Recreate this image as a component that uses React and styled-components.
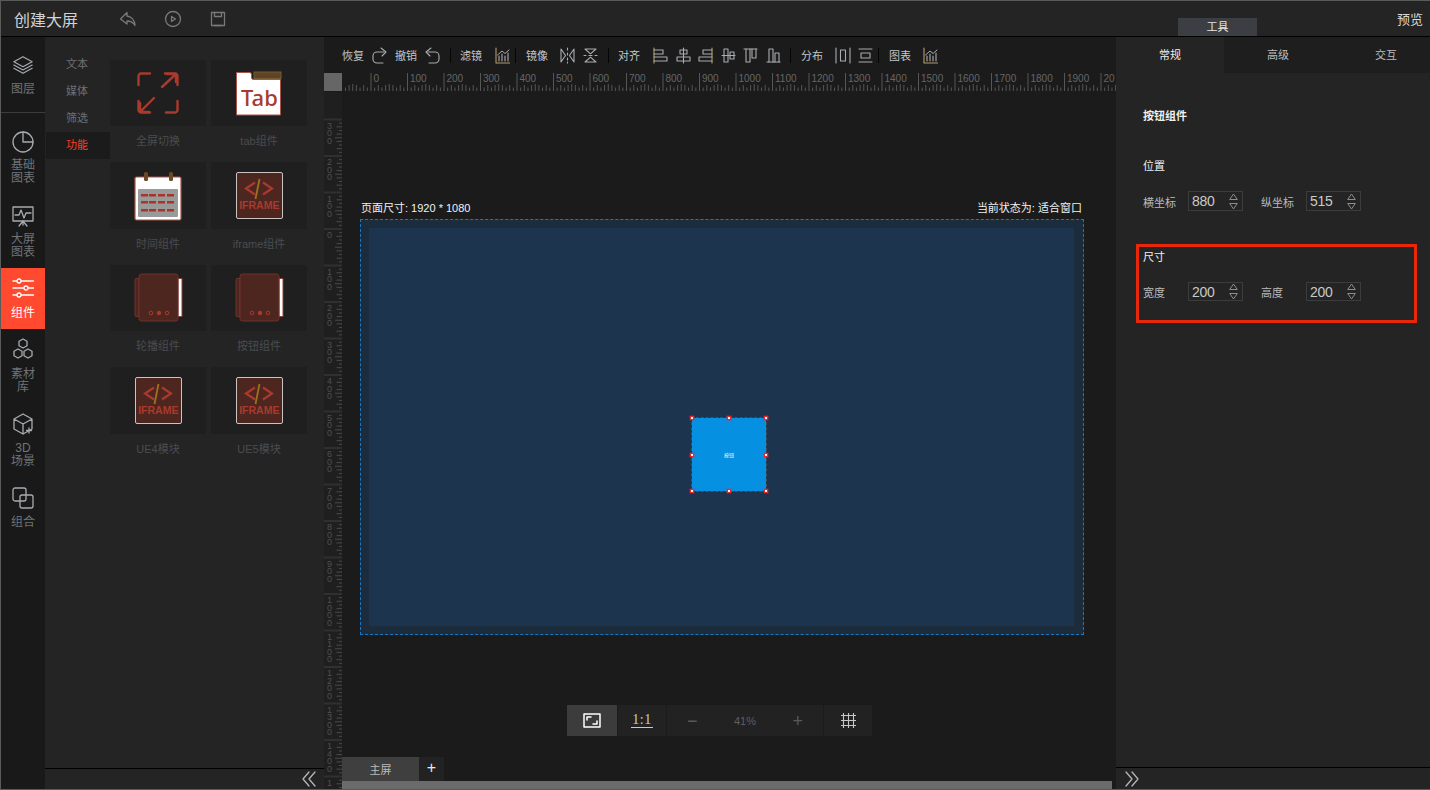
import React from 'react';
import styled, { createGlobalStyle } from 'styled-components';

const Global = createGlobalStyle`
  html, body { margin: 0; padding: 0; background: #242424; }
  body { font-family: "Liberation Sans", "Noto Sans CJK SC", sans-serif; overflow: hidden; }
  * { box-sizing: border-box; }
`;

const Page = styled.div`
  width: 1430px; height: 790px; display: flex; flex-direction: column; background: #242424;
  border-top: 1px solid #5a5a5a; border-left: 1px solid #5a5a5a; border-bottom: 1px solid #5a5a5a;
  overflow: hidden;
`;
const Header = styled.header`
  height: 36px; flex: none; display: flex; align-items: center; background: #242424;
  border-bottom: 1px solid #000; padding-left: 13px; position: relative;
`;
const Title = styled.div`font-size: 16px; color: #d2d2d2; width: 105px;`;
const HeaderIcons = styled.div`display: flex; gap: 27px; align-items: center; color: #77797c;`;
const ToolTab = styled.div`
  position: absolute; left: 1177px; bottom: 0; width: 79px; height: 18px; background: #3b3e43;
  color: #e6e6e6; font-size: 11px; text-align: center; line-height: 19px;
`;
const Preview = styled.div`margin-left: auto; margin-right: 7px; font-size: 13px; color: #d8d8d8; margin-top: -1px;`;

const Body = styled.div`flex: 1; display: flex; min-height: 0;`;

const Nav = styled.nav`width: 44px; flex: none; background: #191919; display: flex; flex-direction: column;`;
const NavItem = styled.div`
  height: ${p => p.$h}px; flex: none; display: flex; flex-direction: column; align-items: center;
  padding-top: ${p => p.$pt}px; font-size: 12px; line-height: 13px; text-align: center;
  color: ${p => p.$active ? '#fff' : '#707377'};
  background: ${p => p.$active ? '#ff4a2f' : 'transparent'};
  border-bottom: ${p => p.$divider ? '1px solid #3c3c3c' : 'none'};
  svg { color: ${p => p.$active ? '#fff' : '#a8abb0'}; margin-bottom: ${p => p.$mb}px; flex: none; }
`;

const LeftPanel = styled.aside`width: 279px; flex: none; background: #242424; display: flex; flex-direction: column;`;
const LeftMain = styled.div`flex: 1; display: flex; min-height: 0; padding-top: 14px;`;
const SubNav = styled.div`width: 65px; flex: none; padding-left: 1px;`;
const SubItem = styled.div`
  height: 27px; line-height: 26px; padding-left: 20px; font-size: 11px;
  color: ${p => p.$active ? '#ff3d25' : '#6e7074'};
  background: ${p => p.$active ? '#1b1b1b' : 'transparent'};
`;
const Grid = styled.div`
  display: grid; grid-template-columns: 96px 96px; column-gap: 5px; row-gap: 36px; align-content: start;
  grid-auto-rows: 66.4px; margin-top: 9px;
`;
const Card = styled.div`display: flex; flex-direction: column; align-items: center;`;
const CardThumb = styled.div`
  width: 96px; height: 66.4px; flex: none; background: #1f1f1f; display: flex; align-items: center; justify-content: center;
`;
const CardLabel = styled.div`margin-top: 8px; font-size: 11px; line-height: 14px; color: #4a4c50;`;
const PanelFoot = styled.div`
  height: ${p => p.$right ? 22 : 21}px; flex: none; border-top: 1px solid #000; display: flex; align-items: center;
  justify-content: ${p => p.$right ? 'flex-start' : 'flex-end'};
  padding: ${p => p.$right ? '0 0 0 9px' : '0 8px 0 0'};
  color: #b4b6ba;
`;

const Center = styled.main`flex: 1; min-width: 0; background: #1b1b1b; display: flex; flex-direction: column;`;
const Toolbar = styled.div`height: 36px; flex: none; display: flex; align-items: center; padding-left: 18px; color: #a9acb0;`;
const ToolLabel = styled.span`font-size: 11px; color: #c4c6c9; width: 22px; flex: none; margin-right: ${p => p.$mr ?? 8}px; white-space: nowrap;`;
const ToolIcon = styled.span`display: flex; flex: none; margin-right: ${p => p.$mr ?? 8}px;`;
const ToolSep = styled.span`width: 1px; height: 15px; flex: none; background: #050505; margin-right: ${p => p.$mr ?? 10}px;`;

const RulerRow = styled.div`height: 19px; flex: none; display: flex;`;
const RulerCorner = styled.div`width: 18px; height: 18px; flex: none; background: #666;`;
const Workspace = styled.div`flex: 1; min-height: 0; display: flex;`;
const VRuler = styled.div`width: 18px; flex: none; background: #1f1f1f; overflow: hidden;`;
const Stage = styled.div`flex: 1; min-width: 0; position: relative; display: flex; flex-direction: column; align-items: flex-start;`;
const CanvasArea = styled.div`width: 724px; margin-top: 108px; margin-left: 18px;`;
const CanvasMeta = styled.div`
  display: flex; justify-content: space-between; color: #f2f2f2; font-size: 11px; line-height: 14px;
  height: 19px; padding: 1px 2px 0 1px;
`;
const Screen = styled.div`
  height: 416px; border: 1px dashed #1a78c2; background: #1b2c3d; padding: 8px 9px 8px 8px;
`;
const ScreenInner = styled.div`
  height: 100%; background: #1c344d; position: relative;
`;
const Widget = styled.div`
  position: absolute; left: 323px; top: 190px;
  width: 74px; height: 73px; background: #0590e1; display: flex; align-items: center; justify-content: center;
  color: #fff; font-size: 5px;
  outline: 1px dashed #3a5468;
`;
const Handle = styled.span`
  position: absolute; width: 4px; height: 4px; background: #fff; border: 1px solid #f0262c;
  box-shadow: 0 0 0 0.5px rgba(240, 38, 44, 0.6);
  left: calc(${p => p.$x}% - 2px); top: calc(${p => p.$y}% - 2px);
`;
const ZoomBar = styled.div`
  display: flex; gap: 1px; height: 31px; margin-top: 70px; margin-left: 225px;
`;
const ZoomCell = styled.div`
  width: ${p => p.$w}px; flex: none; background: ${p => p.$active ? '#3c3c3c' : '#222'};
  color: ${p => p.$color || '#5c5f63'}; display: flex; align-items: center; justify-content: center; font-size: 11px;
`;
const ZoomWide = styled(ZoomCell)`justify-content: space-between; padding: 0 20px;`;
const OneOne = styled.span`
  font-family: "Liberation Serif", serif; font-size: 14px; line-height: 14px; color: #c8c8c8;
  border-bottom: 1px solid #c8c8c8; padding: 0 1px 0; letter-spacing: 0.5px;
`;
const ZoomGlyph = styled.span`font-size: 18px; font-weight: 300; color: #55585c; line-height: 18px;`;
const BottomTabs = styled.div`
  position: absolute; left: 0; right: 0; bottom: 8px; height: 24px; display: flex;
`;
const ScreenTab = styled.div`width: 77px; background: #3f3f3f; color: #bcbcbc; font-size: 11px; text-align: center; line-height: 26px;`;
const AddTab = styled.div`width: 25px; background: #222; color: #e8e8e8; font-size: 16px; text-align: center; line-height: 22px;`;
const HScroll = styled.div`position: absolute; left: 0; right: 4px; bottom: 0; height: 8px; background: #6b6b6b;`;

const RightPanel = styled.aside`width: 314px; flex: none; background: #242424; display: flex; flex-direction: column;`;
const Tabs = styled.div`height: 36px; flex: none; display: flex; background: #1e1e1e;`;
const Tab = styled.div`
  width: 108px; flex: none; text-align: center; line-height: 36px; font-size: 11px;
  color: ${p => p.$active ? '#f0f0f0' : '#bcbcbc'}; background: ${p => p.$active ? '#242424' : 'transparent'};
`;
const Props = styled.div`flex: 1; min-height: 0; padding: 36px 0 0 27px;`;
const PropTitle = styled.div`font-size: 11px; line-height: 14px; color: #efefef; font-weight: ${p => p.$b ? 600 : 400};`;
const Field = styled.div`display: flex; align-items: center; height: ${p => p.$h}px; margin-top: ${p => p.$mt}px;`;
const FieldLabel = styled.span`font-size: 11px; color: #b9bbbe; width: ${p => p.$w}px; flex: none; margin-top: 1px;`;
const NumberBox = styled.div`
  width: 55px; height: 100%; flex: none; border: 1px solid #3c3c3c; display: flex; align-items: center; justify-content: space-between;
  padding: 0 4px 0 3px; color: #c9c9c9; font-size: 14px; letter-spacing: -0.3px; margin-right: 18px;
`;
const Spin = styled.svg`display: block; color: #8d8d8d;`;
const Highlight = styled.section`
  width: 281px; height: 79px; margin: 33px 0 0 -7px; border: 3px solid #e8270b; padding: 3px 0 0 4px;
`;
const PosGroup = styled.div`margin-top: 36px;`;

const Ico = ({ s = 24, w, h, children, vb, sw = 1.3 }) => (
  <svg width={w || s} height={h || s} viewBox={vb || `0 0 ${w || s} ${h || s}`} fill="none" stroke="currentColor" strokeWidth={sw} strokeLinecap="round" strokeLinejoin="round">{children}</svg>
);
const T = ({ w = 15, children }) => <Ico w={w} h={17} sw={1.1}>{children}</Ico>;

const Chart = () => (
  <T><path d="M1 1v15h14" stroke="#b89a6a"/><path d="M4 14V9M7 14V7M10 14V9M13 14V6" /><path d="M2.500 8 7 4l3 2.500L14 3" strokeWidth="1"/></T>
);
const Redo = () => <T><path d="M12 5H5a4 4 0 0 0-4 4v3a4 4 0 0 0 4 4h6" /><path d="M9 1l5 4-4 4" /></T>;
const Undo = () => <T><path d="M3 5h7a4 4 0 0 1 4 4v3a4 4 0 0 1-4 4H4" /><path d="M6 1 1 5l4 4" /></T>;
const FlipH = () => <T><path d="M7.500 1v2M7.500 6v2M7.500 11v2M7.500 15v1" /><path d="M1 2l4.500 6.500L1 15zM14 2 9.500 8.500 14 15z" /></T>;
const FlipV = () => <T><path d="M1 8.500h2M6 8.500h3M12 8.500h2" /><path d="M2 2h11L7.500 6.800zM2 15h11L7.500 10.200z" /></T>;
const AlignL = () => <T><path d="M1 1v15" stroke="#b89a6a"/><path d="M1 3h9v4H1M1 10h13v4H1" /></T>;
const AlignC = () => <T><path d="M7.500 1v15" /><path d="M4 3h7v4H4zM1 10h13v4H1z" /></T>;
const AlignR = () => <T><path d="M14 1v15" stroke="#b89a6a"/><path d="M14 3H5v4h9M14 10H1v4h13" /></T>;
const AlignM = () => <T><path d="M1 8.500h13" /><path d="M3 2h4v13H3zM9 5h4v7H9z" /></T>;
const AlignT = () => <T><path d="M1 2h13" /><path d="M3 2v13h4V2M9 2v9h4V2" /></T>;
const AlignB = () => <T><path d="M1 15h13" /><path d="M3 15V2h4v13M9 15V6h4v9" /></T>;
const DistH = () => <T w={16}><path d="M1 1v15M15 1v15" /><path d="M5.500 3h5v11h-5z" /></T>;
const DistV = () => <T><path d="M1 2h13M1 15h13" /><path d="M3 6h9v5H3z" /></T>;

const IconFull = () => (
  <svg width="42" height="42" viewBox="0 0 42 42" fill="none" stroke="#a83a2e" strokeWidth="2.400" strokeLinecap="round" strokeLinejoin="round">
    <path d="M1.500 13V4a2.500 2.500 0 0 1 2.500-2.500h9M28 1.500h10a2.500 2.500 0 0 1 2.500 2.500v9M1.500 29v9a2.500 2.500 0 0 0 2.500 2.500h9M40.500 29v9a2.500 2.500 0 0 1-2.500 2.500H29"/>
    <path d="M25 15 39 2M30 2h9v8M17 26 3 40M12 40H3v-9"/>
  </svg>
);
const TabText = styled.text`font-family: "Noto Sans", "Liberation Sans", sans-serif; font-size: 22px; font-weight: 500; fill: #a83a2e;`;
const IconTab = () => (
  <svg width="46" height="46" viewBox="0 -2 46 46">
    <path d="M.5 .5h13q2 0 2 2v3q0 2 2 2h27V43H.5z" fill="#fff" stroke="#a9544a" strokeWidth="1"/>
    <rect x="18" y="0" width="27" height="6.500" fill="#5d4426" stroke="#7a5a30" />
    <TabText x="5" y="34">Tab</TabText>
  </svg>
);
const IconCal = () => (
  <svg width="48" height="50" viewBox="0 0 48 50">
    <rect x="1" y="6" width="46" height="43" rx="1.500" fill="#fff" stroke="#a9544a" strokeWidth="1.200"/>
    <rect x="4" y="18" width="40" height="28" rx="1" fill="#9a9a9a"/>
    <rect x="10" y="1" width="4" height="9" rx="1.500" fill="#6d4a25"/>
    <rect x="35" y="1" width="4" height="9" rx="1.500" fill="#6d4a25"/>
    {[23, 30, 38].map(y => [7, 15, 24, 33].map(x => <rect key={`${x}-${y}`} x={x} y={y} width="7" height="2.500" fill="#a8352b"/>))}
  </svg>
);
const IfrText = styled.text`font-family: "Liberation Sans", sans-serif; font-size: 10.5px; font-weight: 700; fill: #a83a2e;`;
const IconFrame = () => (
  <svg width="47" height="47" viewBox="0 0 47 47">
    <rect x=".5" y=".5" width="46" height="46" rx="1.500" fill="#4e2620" stroke="#c9c4c2" strokeWidth="1"/>
    <path d="M19 10.500 10 16.500l9 6M27 10.500l9 6-9 6" fill="none" stroke="#a83a2e" strokeWidth="2.200"/>
    <path d="M23.500 7 19.500 27" stroke="#a0701e" strokeWidth="1.800"/>
    <IfrText x="3.200" y="37">IFRAME</IfrText>
  </svg>
);
const IconCarousel = () => (
  <svg width="49" height="49" viewBox="0 0 49 49" fill="none">
    <path d="M44 5.500h4V43.500h-4z" fill="#fff" stroke="#8a4036"/>
    <path d="M5 5.500H2a1 1 0 0 0-1 1v36a1 1 0 0 0 1 1h3z" fill="#4e2620" stroke="#6e332b"/>
    <rect x="5" y="1" width="39" height="47" rx="2.500" fill="#4e2620" stroke="#6e332b"/>
    <circle cx={17} cy={40} r="1.800" stroke="#a83a2e"/>
    <circle cx={25} cy={40} r="2.200" fill="#a83a2e"/>
    <circle cx={33} cy={40} r="1.800" stroke="#a83a2e"/>
  </svg>
);

const items = [
  ['全屏切换', <IconFull />], ['tab组件', <IconTab />], ['时间组件', <IconCal />], ['iframe组件', <IconFrame />],
  ['轮播组件', <IconCarousel />], ['按钮组件', <IconCarousel />], ['UE4模块', <IconFrame />], ['UE5模块', <IconFrame />],
];

const RulerText = styled.text`font-family: "Liberation Sans", sans-serif; font-size: 10px; fill: #666;`;
const VRulerText = styled.text`font-family: "Liberation Sans", sans-serif; font-size: 9px; fill: #505050; text-anchor: middle;`;

const HRuler = () => {
  const ticks = [];
  const labels = [];
  const o = 29;
  for (let i = -7; i < 212; i++) {
    const x = o + i * 3.65;
    if (x < 3 || x > 774) continue;
    const major = i % 10 === 0;
    const mid = i % 5 === 0;
    const h = major ? 18 : mid ? 7 : (i % 2 === 0 ? 6 : 3.5);
    ticks.push(<line key={i} x1={x} x2={x} y1={18} y2={18 - h} stroke="#565656" />);
    if (major && i >= 0) {
      const room = Math.floor((774 - x - 2.500) / 5.560);
      labels.push(<RulerText key={'t' + i} x={x + 2.500} y={9}>{String(i * 10).slice(0, room)}</RulerText>);
    }
  }
  return <svg width="774" height="18" viewBox="0 0 774 18">{ticks}{labels}</svg>;
};
const VRulerSvg = () => {
  const out = [];
  const o = 228 - 91;
  for (let i = -30; i < 170; i++) {
    const y = o + i * 3.65;
    if (y < 0 || y > 697) continue;
    const major = i % 10 === 0;
    const mid = i % 5 === 0;
    if (major) {
      out.push(<rect key={i} x={0} y={y - 1} width={18} height={2} fill="#303030" />);
      const digits = String(Math.abs(i * 10)).split('');
      digits.forEach((d, k) => {
        const dy = y + 9 + k * 7.500;
        if (dy <= 696 && dy > 8) out.push(<VRulerText key={`${i}-${k}`} x={5.500} y={dy}>{d}</VRulerText>);
      });
    } else {
      out.push(<line key={i} x1={18} x2={mid ? 11 : i % 2 === 0 ? 12.500 : 15} y1={y} y2={y} stroke="#4a4a4a" />);
    }
  }
  return <svg width="18" height="697" viewBox="0 0 18 697">{out}</svg>;
};

const NumberField = ({ value }) => (
  <NumberBox>
    <span>{value}</span>
    <Spin width="9" height="17" viewBox="0 0 9 17" fill="none" stroke="currentColor"><path d="M.7 6.500h7.600L4.500 1zM.7 10.500h7.600L4.500 16z" /></Spin>
  </NumberBox>
);

const handles = [[0, 0], [50, 0], [100, 0], [0, 50], [100, 50], [0, 100], [50, 100], [100, 100]];

export default function App() {
  return (
    <Page>
      <Global />
      <Header>
        <Title>创建大屏</Title>
        <HeaderIcons>
          <Ico s={18}><path d="M8 2.500 1.500 9 8 14v-3c3 0 6 1 8 4.500C16 10 12 6.500 8 6z" /></Ico>
          <Ico s={18}><circle cx="9" cy="9" r="7.500"/><path d="M7.500 6.500 11.500 9l-4 2.500z"/></Ico>
          <Ico s={18}><path d="M2.500 2.500h13v13h-13z"/><path d="M5.500 2.500v4h7v-4M5.500 15.500h7" /></Ico>
        </HeaderIcons>
        <ToolTab>工具</ToolTab>
        <Preview>预览</Preview>
      </Header>
      <Body>
        <Nav>
          <NavItem $h={76} $pt={18} $mb={8} $divider>
            <Ico s={20} vb="0 0 24 24" sw={1.400}><path d="M12 2 23 8l-11 6L1 8z"/><path d="M1 12l11 6 11-6M1 16l11 6 11-6"/></Ico>
            图层
          </NavItem>
          <NavItem $h={77} $pt={18} $mb={6}>
            <Ico s={22} sw={1.300}><circle cx="11" cy="11" r="10"/><path d="M11 1v10h10"/></Ico>
            <span>基础<br/>图表</span>
          </NavItem>
          <NavItem $h={78} $pt={15} $mb={6}>
            <Ico s={22} sw={1.300}><path d="M1 2h20v14H1z"/><path d="M3 10h4l2-5 3 8 2-5h5M11 16v4M7 21l4-5 4 5"/></Ico>
            <span>大屏<br/>图表</span>
          </NavItem>
          <NavItem $h={61} $pt={9} $mb={8} $active>
            <Ico s={22} sw={1.300}><path d="M1 4h21M1 11h21M1 18h21"/><circle cx="7" cy="4" r="2" fill="#ff4a2f"/><circle cx="14" cy="11" r="2" fill="#ff4a2f"/><circle cx="7" cy="18" r="2" fill="#ff4a2f"/></Ico>
            组件
          </NavItem>
          <NavItem $h={75} $pt={9} $mb={8}>
            <Ico s={22} sw={1.300}><path d="M11 1l4 2.300v4.400L11 10 7 7.700V3.300zM6 11l4 2.300v4.400L6 20l-4-2.300v-4.400zM16 11l4 2.300v4.400L16 20l-4-2.300v-4.400z"/></Ico>
            <span>素材<br/>库</span>
          </NavItem>
          <NavItem $h={74} $pt={9} $mb={7}>
            <Ico s={22} sw={1.300}><path d="M11 1l9 5v10l-9 5-9-5V6zM2 6l9 5 9-5M11 11v10"/><path d="M17 15v5M14.500 17.500h5"/></Ico>
            <span>3D<br/>场景</span>
          </NavItem>
          <NavItem $h={60} $pt={9} $mb={7}>
            <Ico s={22} sw={1.300}><rect x="1" y="1" width="13" height="13" rx="2"/><rect x="8" y="8" width="13" height="13" rx="2"/></Ico>
            组合
          </NavItem>
        </Nav>
        <LeftPanel>
          <LeftMain>
            <SubNav>
              <SubItem>文本</SubItem>
              <SubItem>媒体</SubItem>
              <SubItem>筛选</SubItem>
              <SubItem $active>功能</SubItem>
            </SubNav>
            <Grid>
              {items.map(([label, icon]) => (
                <Card key={label}>
                  <CardThumb>{icon}</CardThumb>
                  <CardLabel>{label}</CardLabel>
                </Card>
              ))}
            </Grid>
          </LeftMain>
          <PanelFoot>
            <Ico w={14} h={16}><path d="M7 1 1 8l6 7M13 1 7 8l6 7"/></Ico>
          </PanelFoot>
        </LeftPanel>
        <Center>
          <Toolbar>
            <ToolLabel>恢复</ToolLabel><ToolIcon><Redo /></ToolIcon>
            <ToolLabel>撤销</ToolLabel><ToolIcon $mr={10}><Undo /></ToolIcon>
            <ToolSep $mr={9} />
            <ToolLabel $mr={13}>滤镜</ToolLabel><ToolIcon $mr={5}><Chart /></ToolIcon>
            <ToolSep />
            <ToolLabel $mr={12}>镜像</ToolLabel><ToolIcon><FlipH /></ToolIcon><ToolIcon $mr={10}><FlipV /></ToolIcon>
            <ToolSep $mr={9}/>
            <ToolLabel $mr={13}>对齐</ToolLabel>
            <ToolIcon $mr={7.600}><AlignL /></ToolIcon><ToolIcon $mr={7.600}><AlignC /></ToolIcon><ToolIcon $mr={7.600}><AlignR /></ToolIcon><ToolIcon $mr={7.600}><AlignM /></ToolIcon><ToolIcon $mr={7.600}><AlignT /></ToolIcon><ToolIcon $mr={9}><AlignB /></ToolIcon>
            <ToolSep />
            <ToolLabel $mr={12}>分布</ToolLabel><ToolIcon $mr={7}><DistH /></ToolIcon><ToolIcon $mr={5}><DistV /></ToolIcon>
            <ToolSep />
            <ToolLabel $mr={12}>图表</ToolLabel><ToolIcon><Chart /></ToolIcon>
          </Toolbar>
          <RulerRow>
            <RulerCorner />
            <HRuler />
          </RulerRow>
          <Workspace>
            <VRuler><VRulerSvg /></VRuler>
            <Stage>
              <CanvasArea>
                <CanvasMeta><span>页面尺寸: 1920 * 1080</span><span>当前状态为: 适合窗口</span></CanvasMeta>
                <Screen>
                  <ScreenInner>
                    <Widget>
                      按钮
                      {handles.map(([x, y]) => <Handle key={`${x}${y}`} $x={x} $y={y} />)}
                    </Widget>
                  </ScreenInner>
                </Screen>
              </CanvasArea>
              <ZoomBar>
                <ZoomCell $w={50} $active $color="#fff">
                  <Ico w={18} h={15} sw={1.500}><rect x="1" y="1" width="16" height="13"/><path d="M4 7V4h4M14 8v3h-4"/></Ico>
                </ZoomCell>
                <ZoomCell $w={48}><OneOne>1:1</OneOne></ZoomCell>
                <ZoomWide $w={156}><ZoomGlyph>−</ZoomGlyph><span>41%</span><ZoomGlyph>+</ZoomGlyph></ZoomWide>
                <ZoomCell $w={48} $color="#c8c8c8">
                  <Ico w={15} h={15} sw={1.100}><path d="M2.500 0v15M7.500 0v15M12.500 0v15M0 2.500h15M0 7.500h15M0 12.500h15"/></Ico>
                </ZoomCell>
              </ZoomBar>
              <BottomTabs>
                <ScreenTab>主屏</ScreenTab>
                <AddTab>+</AddTab>
              </BottomTabs>
              <HScroll />
            </Stage>
          </Workspace>
        </Center>
        <RightPanel>
          <Tabs>
            <Tab $active>常规</Tab>
            <Tab>高级</Tab>
            <Tab>交互</Tab>
          </Tabs>
          <Props>
            <PropTitle $b>按钮组件</PropTitle>
            <PosGroup>
              <PropTitle>位置</PropTitle>
              <Field $h={20} $mt={18}>
                <FieldLabel $w={45}>横坐标</FieldLabel>
                <NumberField value="880" />
                <FieldLabel $w={45}>纵坐标</FieldLabel>
                <NumberField value="515" />
              </Field>
            </PosGroup>
            <Highlight>
              <PropTitle>尺寸</PropTitle>
              <Field $h={19} $mt={18}>
                <FieldLabel $w={45}>宽度</FieldLabel>
                <NumberField value="200" />
                <FieldLabel $w={45}>高度</FieldLabel>
                <NumberField value="200" />
              </Field>
            </Highlight>
          </Props>
          <PanelFoot $right>
            <Ico w={14} h={16}><path d="M1 1l6 7-6 7M7 1l6 7-6 7"/></Ico>
          </PanelFoot>
        </RightPanel>
      </Body>
    </Page>
  );
}
